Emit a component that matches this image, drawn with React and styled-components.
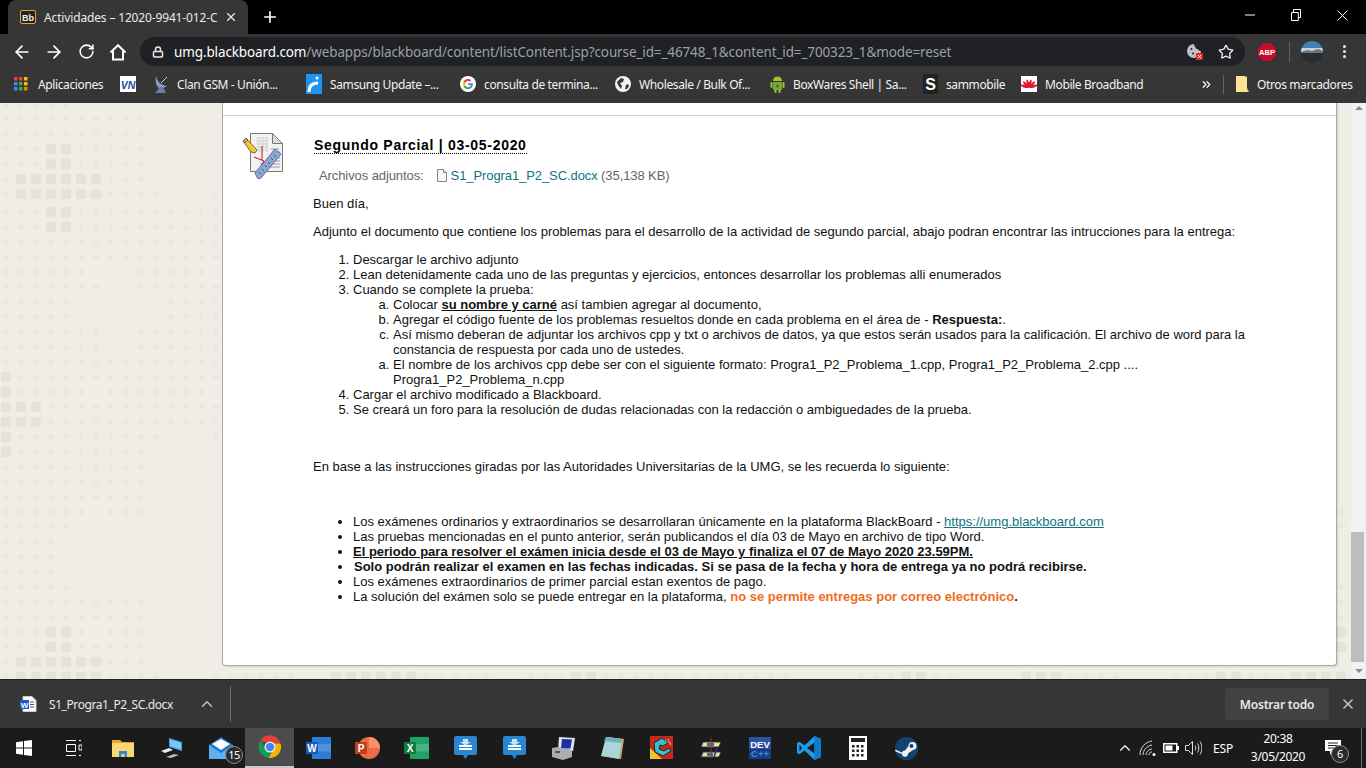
import React from 'react';
import styled, { createGlobalStyle } from 'styled-components';
import { ArrowLeft, ArrowRight, RotateCw, Lock, Star, X, Plus, ChevronUp, ChevronsRight } from 'lucide-react';

const GlobalStyle = createGlobalStyle`
  html, body { margin: 0; padding: 0; overflow: hidden; background: #000; }
  * { box-sizing: border-box; }
`;

const uiFont = `"Noto Sans", "Open Sans", sans-serif`;

const Screen = styled.div`
  width: 1366px;
  height: 768px;
  display: flex;
  flex-direction: column;
  overflow: hidden;
  font-family: ${uiFont};
`;

/* barra de pestañas */
const TabStrip = styled.div`
  height: 34px;
  background: #000;
  display: flex;
  align-items: flex-end;
  padding-left: 8px;
  color: #fff;
`;

const Tab = styled.div`
  width: 240px;
  height: 34px;
  background: #363636;
  border-radius: 8px 8px 0 0;
  display: flex;
  align-items: center;
  padding: 0 0 0 12px;
  gap: 8px;
  font-size: 12px;
  color: #e8eaed;
  white-space: nowrap;
`;

const TabTitle = styled.span`
  width: 172px;
  letter-spacing: -0.15px;
`;

const NewTab = styled.div`
  width: 44px;
  height: 34px;
  display: flex;
  align-items: center;
  justify-content: center;
`;

const WindowButtons = styled.div`
  margin-left: auto;
  height: 34px;
  display: flex;
  align-items: center;
`;

const WindowButton = styled.div`
  width: 46.5px;
  height: 30px;
  display: flex;
  align-items: center;
  justify-content: center;
  margin-bottom: 4px;
`;

/* barra de direcciones */
const Toolbar = styled.div`
  height: 36px;
  background: #363636;
  display: flex;
  align-items: flex-start;
  padding: 3px 0 0 6px;
  color: #fff;
`;

const NavButton = styled.div`
  width: 32px;
  height: 29px;
  display: flex;
  align-items: center;
  justify-content: center;
`;

const Omnibox = styled.div`
  margin-left: 6px;
  width: 1105px;
  height: 29px;
  border-radius: 15px;
  background: #202124;
  display: flex;
  align-items: center;
  padding: 0 11px 0 12px;
  font-size: 13.5px;
  color: #9aa0a6;
  white-space: nowrap;
`;

const Url = styled.span`
  margin-left: 10px;
  letter-spacing: -0.12px;
  b { font-weight: 400; color: #fff; }
`;

const OmniIcons = styled.div`
  margin-left: auto;
  display: flex;
  align-items: center;
  gap: 15px;
`;

const ToolIcons = styled.div`
  flex: 1;
  display: flex;
  align-items: center;
  height: 29px;
  padding-left: 13px;
  gap: 13px;
`;

const ToolDivider = styled.div`
  width: 1px;
  height: 20px;
  background: #5f6368;
  margin-right: -2px;
`;

const Dots = styled.div`
  margin-left: 7px;
  width: 4px;
  display: flex;
  flex-direction: column;
  gap: 2px;
  i { display: block; width: 3px; height: 3px; border-radius: 50%; background: #e8eaed; }
`;

/* marcadores */
const BookmarkBar = styled.div`
  height: 33px;
  background: #363636;
  display: flex;
  align-items: center;
  padding: 0 0 5px 14px;
  font-size: 12px;
  color: #f1f3f4;
  white-space: nowrap;
`;

const Bookmark = styled.div`
  width: ${(p) => p.$w}px;
  display: flex;
  align-items: center;
  gap: ${(p) => p.$gap ?? 8}px;
  flex: none;
  span { letter-spacing: -0.38px; }
`;

const BarDivider = styled.div`
  width: 1px;
  height: 19px;
  background: #5f6368;
  margin: 0 12px 0 10px;
`;

/* página */
const Page = styled.div`
  position: relative;
  height: 576px;
  background: #efede6;
  display: flex;
  overflow: hidden;
`;

const PatternLayer = styled.svg`
  position: absolute;
  left: 0;
  top: 0;
`;

const CardArea = styled.div`
  position: relative;
  flex: 1;
  padding: 0 14px 13px 222px;
`;

const Card = styled.div`
  height: 100%;
  background: #fff;
  border: 1px solid #a9a9a4;
  border-top: 0;
  border-radius: 0 0 4px 4px;
  box-shadow: 1px 1px 2px rgba(0, 0, 0, 0.12);
`;

const CardTop = styled.div`
  height: 13px;
  border-bottom: 1px solid #ccc;
`;

const ItemRow = styled.div`
  display: flex;
  padding: 17px 0 0 19px;
`;

const ItemIcon = styled.div`
  width: 71px;
  flex: none;
`;

const ItemBody = styled.div`
  width: 938px;
  font-family: "Liberation Sans", Arial, sans-serif;
  font-size: 13px;
  line-height: 15px;
  color: #111;
`;

const Title = styled.h3`
  display: inline-block;
  margin: 4px 0 0 1px;
  font-size: 14px;
  line-height: 16px;
  font-weight: 700;
  letter-spacing: 0.7px;
  color: #000;
  border-bottom: 1px dotted #000;
`;

const Attached = styled.div`
  display: flex;
  align-items: center;
  margin: 14px 0 0 6px;
  color: #666;
  letter-spacing: -0.09px;
`;

const AttachedFile = styled.div`
  display: flex;
  align-items: center;
  margin-left: 12px;
  gap: 3px;
`;

const FileLink = styled.a`
  color: #0f7382;
  text-decoration: none;
`;

const UrlLink = styled(FileLink)`
  text-decoration: underline;
`;

const Para = styled.p`
  margin: ${(p) => p.$top ?? 13}px 0 0;
`;

const Numbered = styled.ol`
  margin: ${(p) => p.$top ?? 0}px 0 0;
  padding-left: 40px;
`;

const Bullets = styled.ul`
  margin: 40px 0 0;
  padding-left: 40px;
`;

const Em = styled.strong`
  text-decoration: ${(p) => (p.$u ? 'underline' : 'none')};
  color: ${(p) => p.$c ?? 'inherit'};
  margin-left: ${(p) => p.$indent ?? 0}px;
`;

const Scrollbar = styled.div`
  position: relative;
  width: 15px;
  background: #f1f1f1;
  display: flex;
  flex-direction: column;
  align-items: center;
  justify-content: space-between;
  padding: 3px 0 6px;
`;

const ScrollThumb = styled.div`
  position: absolute;
  left: 0;
  top: 429px;
  width: 13px;
  height: 130px;
  background: #bdbdbd;
`;

const ScrollArrow = styled.div`
  width: 0;
  height: 0;
  border-left: 4px solid transparent;
  border-right: 4px solid transparent;
  ${(p) => (p.$up ? 'border-bottom: 4px solid #8a8a8a;' : 'border-top: 4px solid #8a8a8a;')}
`;

/* barra de descargas */
const DownloadBar = styled.div`
  height: 49px;
  background: #363636;
  border-top: 1px solid #222;
  display: flex;
  align-items: center;
  padding-left: 20px;
  font-size: 12px;
  color: #e8eaed;
`;

const DownloadName = styled.span`
  margin-left: 12px;
  width: 126px;
  letter-spacing: -0.42px;
  white-space: nowrap;
`;

const DownloadCaret = styled.div`
  width: 18px;
  margin-left: 23px;
  display: flex;
  color: #bdc1c6;
`;

const DownloadDivider = styled.div`
  width: 1px;
  height: 36px;
  background: #6b6b6b;
  margin-left: 14px;
`;

const ShowAll = styled.button`
  margin-left: auto;
  width: 104px;
  height: 32px;
  border: 0;
  border-radius: 4px;
  background: #424242;
  color: #e8eaed;
  font: 600 12px ${uiFont};
  letter-spacing: -0.2px;
`;

const CloseBar = styled.div`
  width: 37px;
  display: flex;
  justify-content: center;
  color: #c4c4c4;
`;

/* barra de tareas */
const Taskbar = styled.div`
  height: 40px;
  background: #1b1b1b;
  display: flex;
  align-items: stretch;
  color: #fff;
`;

const TaskButton = styled.div`
  position: relative;
  width: ${(p) => p.$w ?? 49}px;
  flex: none;
  display: flex;
  align-items: center;
  justify-content: center;
  background: ${(p) => (p.$active ? '#4c4c4c' : 'transparent')};
  border-bottom: ${(p) => (p.$active ? '2px solid #c9c9c9' : '0')};
`;

const Badge = styled.span`
  position: absolute;
  right: ${(p) => p.$r ?? 2}px;
  bottom: ${(p) => p.$b ?? 4}px;
  min-width: 18px;
  height: 18px;
  border-radius: 50%;
  background: #2a2a2a;
  border: 1px solid #8f8f8f;
  color: #fff;
  font-size: 11px;
  line-height: 16px;
  text-align: center;
  letter-spacing: -0.5px;
`;

const Tray = styled.div`
  margin-left: auto;
  display: flex;
  align-items: center;
  padding-right: 4px;
  font-size: 12px;
  color: #fff;
`;

const TrayIcon = styled.div`
  width: 23px;
  display: flex;
  justify-content: center;
`;

const Lang = styled.div`
  width: 36px;
  text-align: center;
  letter-spacing: -0.2px;
`;

const Clock = styled.div`
  width: 74px;
  text-align: center;
  line-height: 18px;
  letter-spacing: -0.3px;
`;

const Notice = styled.div`
  position: relative;
  width: 46px;
  height: 40px;
  display: flex;
  align-items: center;
  padding-left: 10px;
  margin-top: -1px;
`;

const ShowDesktop = styled.div`
  width: 1px;
  height: 40px;
  background: #6f6f6f;
`;

/* dibujos */
const Bb = () => (
  <svg width="16" height="14" viewBox="0 0 16 14">
    <rect x="0.5" y="0.5" width="15" height="13" rx="1.5" fill="#222" stroke="#e8a33b" />
    <text x="8" y="10.5" textAnchor="middle" fontSize="9" fontWeight="700" fill="#eee" fontFamily="Liberation Sans">Bb</text>
  </svg>
);

const HomeIcon = () => (
  <svg width="18" height="18" viewBox="0 0 18 18" fill="none" stroke="#fff" strokeWidth="2" strokeLinejoin="miter">
    <path d="M1.5 9.5 9 2.2l7.5 7.3M4 8v8.5h10V8" />
  </svg>
);

const Minimize = () => <svg width="10" height="10" viewBox="0 0 10 10"><path d="M0 5h10" stroke="#fff" /></svg>;
const Restore = () => (
  <svg width="10" height="12" viewBox="0 0 10 12" fill="none" stroke="#fff">
    <path d="M.5 3.5h6.8v8H.5zM2.5 3.5V.5h7v8H7.3" />
  </svg>
);
const Close = () => <svg width="11" height="11" viewBox="0 0 11 11"><path d="M.5.5l10 10M10.5.5l-10 10" stroke="#fff" /></svg>;

const CookieBlocked = () => (
  <svg width="16" height="17" viewBox="0 0 16 17">
    <path d="M7 1a7 7 0 1 0 7 7c-2 .3-3-1-3-2-1.500.200-3-.800-2.800-2.800C7.300 3 7 2 7 1z" fill="#bdc1c6" />
    <circle cx="4.500" cy="6" r="1" fill="#202124" /><circle cx="6" cy="10.500" r="1" fill="#202124" />
    <rect x="9" y="10" width="7" height="7" rx="1" fill="#d93025" />
    <path d="M11 12l3 3M14 12l-3 3" stroke="#fff" />
  </svg>
);

const Abp = () => (
  <svg width="18" height="18" viewBox="0 0 18 18">
    <path d="M5.500 0h7L18 5.500v7L12.500 18h-7L0 12.500v-7z" fill="#c70d2c" />
    <text x="9" y="12" textAnchor="middle" fontSize="7.500" fontWeight="700" fill="#fff" fontFamily="Liberation Sans">ABP</text>
  </svg>
);

const Avatar = () => (
  <svg width="22" height="22" viewBox="0 0 22 22">
    <defs><clipPath id="avatarClip"><circle cx="11" cy="11" r="11" /></clipPath></defs>
    <g clipPath="url(#avatarClip)">
      <rect width="22" height="8" fill="#3f7fb8" />
      <rect y="7" width="22" height="4" fill="#c6d4de" />
      <rect y="11" width="22" height="11" fill="#2b2c2e" />
      <path d="M0 11l6-2 5 1 6-2 5 2v2H0z" fill="#6d7378" />
    </g>
  </svg>
);

const Apps = () => {
  const colors = ['#ea4335', '#ea4335', '#fbbc04', '#4285f4', '#34a853', '#fbbc04', '#4285f4', '#34a853', '#ea8600'];
  return (
    <svg width="14" height="14" viewBox="0 0 14 14">
      {colors.map((c, i) => (
        <rect key={i} x={(i % 3) * 5} y={Math.floor(i / 3) * 5} width="3.500" height="3.500" fill={c} />
      ))}
    </svg>
  );
};

const Vn = () => (
  <svg width="16" height="16" viewBox="0 0 16 16">
    <rect width="16" height="16" fill="#fff" />
    <text x="8" y="12.500" textAnchor="middle" fontSize="10.500" fontWeight="700" fontStyle="italic" fill="#1d4e9e" fontFamily="Liberation Sans">VN</text>
  </svg>
);

const Dish = () => (
  <svg width="16" height="18" viewBox="0 0 16 18">
    <path d="M3 1c1 5 4 9 11 10-3 2-6 3-8 2C3 11 2 6 3 1z" fill="#8c9bc4" />
    <path d="M7 12 2 18h11l-3-6z" fill="#6d7ba5" />
    <path d="M8 8l6-6" stroke="#c8cfe4" />
  </svg>
);

const SamsungUpdate = () => (
  <svg width="16" height="20" viewBox="0 0 16 20">
    <rect width="16" height="20" fill="#1e96f0" />
    <circle cx="11" cy="4" r="1.500" fill="#fff" />
    <path d="M3 18c0-6 3-9 9-9" fill="none" stroke="#fff" strokeWidth="3" />
  </svg>
);

const GoogleG = () => (
  <svg width="16" height="16" viewBox="0 0 16 16">
    <circle cx="8" cy="8" r="8" fill="#fff" />
    <path d="M12.800 8.200c0-.400 0-.700-.1-1H8v1.900h2.700c-.100.700-.500 1.200-1 1.600l1.600 1.200c1-.900 1.500-2.200 1.500-3.700z" fill="#4285f4" />
    <path d="M8 13c1.300 0 2.400-.400 3.300-1.100l-1.600-1.200c-.400.300-1 .500-1.700.500-1.300 0-2.400-.900-2.800-2L3.500 10.400C4.300 12 6 13 8 13z" fill="#34a853" />
    <path d="M5.200 9.200a3 3 0 0 1 0-2L3.500 5.600a5 5 0 0 0 0 4.800z" fill="#fbbc04" />
    <path d="M8 5c.700 0 1.400.300 1.900.700l1.400-1.400A5 5 0 0 0 3.500 5.600l1.700 1.600C5.600 5.900 6.700 5 8 5z" fill="#ea4335" />
  </svg>
);

const Globe = () => (
  <svg width="16" height="16" viewBox="0 0 16 16">
    <circle cx="8" cy="8" r="8" fill="#f1f3f4" />
    <path d="M6 2 9 3 8 6 5 7 7 10l-1 3-3-4-1-3zM11 9l2-1 1 2-2 3-2 0z" fill="#363636" />
  </svg>
);

const Android = () => (
  <svg width="15" height="18" viewBox="0 0 15 18">
    <path d="M3 6a4.500 4.500 0 0 1 9 0z" fill="#9fc43a" />
    <rect x="3" y="7" width="9" height="8" rx="1" fill="#7fa62b" />
    <rect x="0.500" y="7" width="2" height="6" rx="1" fill="#9fc43a" />
    <rect x="12.500" y="7" width="2" height="6" rx="1" fill="#9fc43a" />
    <rect x="4.500" y="14" width="2" height="4" rx="1" fill="#9fc43a" />
    <rect x="8.500" y="14" width="2" height="4" rx="1" fill="#9fc43a" />
    <path d="M6 11l1.500-2L9 11l-1.500 2z" fill="#2c5fa0" />
  </svg>
);

const SamMobile = () => (
  <svg width="15" height="20" viewBox="0 0 15 20">
    <rect width="15" height="20" rx="1" fill="#222" />
    <text x="7.500" y="16" textAnchor="middle" fontSize="16" fontWeight="700" fill="#fff" fontFamily="Liberation Sans">S</text>
  </svg>
);

const Huawei = () => (
  <svg width="16" height="16" viewBox="0 0 16 16">
    <rect width="16" height="16" fill="#fff" />
    <g fill="#e1132a">
      {[-70, -42, -14, 14, 42, 70].map((a) => (
        <path key={a} d="M8 12C6.500 9 6.500 5.500 7.500 3.500h1C9.500 5.500 9.500 9 8 12z" transform={`rotate(${a} 8 12)`} />
      ))}
    </g>
  </svg>
);

const Folder = () => (
  <svg width="13" height="18" viewBox="0 0 13 18">
    <path d="M0 1h8l3 1v15H0z" fill="#fde293" />
    <path d="M11 13v4h2z" fill="#f9cb4f" />
  </svg>
);

const AssignmentIcon = () => (
  <svg width="42" height="46" viewBox="0 0 42 46">
    <path d="M8.500.500h22l10 10v28h-32z" fill="#f2f2f2" stroke="#777" />
    <path d="M30.500.500v10h10z" fill="#ddd" stroke="#777" />
    <g stroke="#cfcfcf">
      <path d="M14 5h12M14 8h12M14 11h12M14 14h12M14 17h12M17 5v14M21 5v14M25 5v14" />
    </g>
    <g stroke="#999">
      <path d="M29 16h8M30 19h8M32 22h6M33 25h5M32 28h6M28 31h10M24 34h14" />
    </g>
    <path d="M13 40 33 16l6 5-20 24-3 1z" fill="#8ea7d2" stroke="#5a6f99" />
    <path d="M17 39l2 2M20 36l2 2M23 32l2 2M26 29l2 2M29 25l2 2M32 22l2 2" stroke="#3f5680" />
    <path d="M1 8 4 5l11 12-2 3-4-1z" fill="#f3c640" stroke="#7c6a2a" />
    <path d="M1 8l3-3 2 2-3 3z" fill="#e58a7a" stroke="#7c6a2a" />
    <path d="M20 13v14M12 24l10 4-3 4" fill="none" stroke="#c4121f" />
  </svg>
);

const FileIcon = () => (
  <svg width="12" height="13" viewBox="0 0 12 13">
    <path d="M1.500.500h6l3 3v9h-9z" fill="#f8f8f8" stroke="#7d8794" />
    <path d="M7.500.500v3h3" fill="#dfe3e8" stroke="#7d8794" />
  </svg>
);

const WordFile = () => (
  <svg width="17" height="16" viewBox="0 0 17 16">
    <path d="M3 .500h9l4 4V15.500H3z" fill="#fff" stroke="#ccc" />
    <path d="M10 6h4M10 8.500h4M10 11h4" stroke="#2b579a" />
    <rect y="4" width="9" height="9" fill="#1d5bbd" />
    <text x="4.500" y="11.500" textAnchor="middle" fontSize="8" fontWeight="700" fill="#fff" fontFamily="Liberation Sans">W</text>
  </svg>
);

const Windows = () => (
  <svg width="16" height="16" viewBox="0 0 16 16" fill="#fff">
    <path d="M0 2.300 7 1.300V7.500H0zM8 1.100 16 0V7.500H8zM0 8.500h7v6.200L0 13.700zM8 8.500h8V16L8 14.900z" />
  </svg>
);

const TaskView = () => (
  <svg width="17" height="16" viewBox="0 0 17 16" fill="none" stroke="#fff">
    <path d="M1 .500h10M1 15.500h10M1.500 4.500h9v7h-9z" />
    <path d="M14 .500h2M14 15.500h2M14 5h3v5h-3z" />
  </svg>
);

const Explorer = () => (
  <svg width="22" height="18" viewBox="0 0 22 18">
    <path d="M0 1h8l2 2h12v15H0z" fill="#e4a52f" />
    <rect y="4" width="22" height="14" fill="#fbd774" />
    <path d="M7 18v-6h8v6h-2.500v-3h-3v3z" fill="#2f87d6" />
  </svg>
);

const Laptop = () => (
  <svg width="24" height="22" viewBox="0 0 24 22">
    <path d="M9 1l13 4v9L9 10z" fill="#3ba0e8" />
    <path d="M10 2.500l11 3.400v6.500L10 9z" fill="#7cc6f4" />
    <path d="M1 14l8-3 4 2-8 3z" fill="#e8e8e8" />
    <path d="M6 20l8-3 5 1-8 3z" fill="#b9b9b9" />
  </svg>
);

const Mail = () => (
  <svg width="24" height="22" viewBox="0 0 24 22">
    <path d="M0 8 12 0l12 8v14H0z" fill="#1a78d0" />
    <path d="M0 8l12 8 12-8v14H0z" fill="#5db2ef" />
    <path d="M3 7l9-5 9 5-9 6z" fill="#fff" />
  </svg>
);

const Chrome = () => (
  <svg width="24" height="24" viewBox="0 0 24 24">
    <path d="M2.300 6A11 11 0 0 1 22.500 8.500H12z" fill="#db4437" />
    <path d="M2.300 6A11 11 0 0 0 10.500 22.900L14 14 8 13z" fill="#0f9d58" />
    <path d="M22.500 8.500A11 11 0 0 1 10.500 22.900L16 13 12 8.500z" fill="#f4b400" />
    <circle cx="12" cy="12" r="5.500" fill="#f1f1f1" />
    <circle cx="12" cy="12" r="4.200" fill="#4285f4" />
  </svg>
);

const Office = ({ back, front, letter, round }) => (
  <svg width="25" height="22" viewBox="0 0 25 22">
    {round ? <circle cx="14" cy="11" r="11" fill={back} /> : <rect x="6" width="19" height="22" rx="1" fill={back} />}
    {round ? <path d="M14 0a11 11 0 0 1 11 11H14z" fill="#ff8f6b" /> : <rect x="6" y="7" width="19" height="7.500" fill="rgba(255,255,255,.18)" />}
    <rect y="5" width="12" height="12" rx="1" fill={front} />
    <text x="6" y="14.500" textAnchor="middle" fontSize="10" fontWeight="700" fill="#fff" fontFamily="Liberation Sans">{letter}</text>
  </svg>
);

const Dropper = () => (
  <svg width="23" height="24" viewBox="0 0 23 24">
    <path d="M2 0h19a2 2 0 0 1 2 2v15a2 2 0 0 1-2 2h-7l-2.500 4L9 19H2a2 2 0 0 1-2-2V2a2 2 0 0 1 2-2z" fill="#2a86d0" />
    <path d="M5 10h13M5 13h13" stroke="#fff" strokeWidth="2" />
    <path d="M9 3h5v3h3l-5.500 3.500L6 6h3z" fill="#bfe7f7" />
  </svg>
);

const Scanner = () => (
  <svg width="24" height="24" viewBox="0 0 24 24">
    <path d="M7 1l16 1-2 13H6z" fill="#dfe3ea" />
    <path d="M10 3l10 .500-1.500 9H9z" fill="#1c2fa8" />
    <path d="M0 12l6-1 14 3v7l-9 3-11-3z" fill="#a9adb4" />
    <path d="M3 15h5v2H3z" fill="#555" />
  </svg>
);

const Notepad = () => (
  <svg width="23" height="23" viewBox="0 0 23 23">
    <path d="M6 0l17 2-3 20-19-3z" fill="#c9a56a" />
    <path d="M5 0l16 2-3 20L0 19z" fill="#a7d7da" />
    <path d="M5 0l16 2-1 4L3 4z" fill="#6fb0b8" />
  </svg>
);

const CodeBlocks = () => (
  <svg width="24" height="24" viewBox="0 0 24 24">
    <rect width="23" height="23" fill="#c7281a" />
    <path d="M0 12l12 11H0z" fill="#f0c52e" />
    <path d="M4 7l8-5 6 5-5 3-3-1-1 4 5 2 5-3 2 3-8 5-8-4z" fill="#2fc3cf" stroke="#222" />
    <path d="M15 4l6 4M18 3l3 6" stroke="#eee" strokeDasharray="1 1" />
  </svg>
);

const Dev = () => (
  <svg width="22" height="22" viewBox="0 0 22 22">
    <rect width="22" height="22" fill="#2c4f9e" />
    <rect y="12" width="22" height="10" fill="#1a3b86" />
    <text x="11" y="10.500" textAnchor="middle" fontSize="9.500" fontWeight="700" fill="#fff" fontFamily="Liberation Sans">DEV</text>
    <text x="11" y="20" textAnchor="middle" fontSize="9.500" fontWeight="700" fill="#3e8de0" fontFamily="Liberation Sans">C++</text>
  </svg>
);

const Tools = () => (
  <svg width="22" height="20" viewBox="0 0 22 20">
    <path d="M3 4h18l-2 5H1z" fill="#dfe59a" stroke="#333" />
    <path d="M3 14h18l-2 5H1z" fill="#dfe59a" stroke="#333" />
    <path d="M11 0v20" stroke="#a3261f" />
    <path d="M7 5h7v3H7zM7 15h6v3H7z" fill="#5b5f86" />
    <path d="M17 10l-3 9" stroke="#1730c4" strokeWidth="1.500" />
  </svg>
);

const VsCode = () => (
  <svg width="24" height="24" viewBox="0 0 24 24">
    <path d="M17.500 0 24 3v18l-6.500 3-10-9.500-5 3.800L0 17V7l2.500-1.300 5 3.800z" fill="#1f9cf0" />
    <path d="M17.500 6.500 10 12l7.500 5.500z" fill="#1b1b1b" />
    <path d="M2.500 8.500 5 12l-2.500 3.500z" fill="#1b1b1b" />
    <path d="M17.500 0 24 3v18l-6.500 3z" fill="#0e7cc9" />
  </svg>
);

const Calc = () => (
  <svg width="18" height="24" viewBox="0 0 18 24">
    <rect width="18" height="24" fill="#fff" />
    <rect x="2" y="2" width="14" height="4" fill="#222" />
    {[0, 1, 2].map((r) => [0, 1, 2].map((c) => (
      <rect key={`${r}${c}`} x={3 + c * 4.500} y={9 + r * 4.500} width="2.500" height="2.500" fill="#222" />
    )))}
  </svg>
);

const Steam = () => (
  <svg width="23" height="23" viewBox="0 0 23 23">
    <circle cx="11.500" cy="11.500" r="11.500" fill="#12436f" />
    <path d="M0 12.500 7 15.500A3 3 0 0 1 10 13.500l3.500-4.500A4 4 0 1 1 18 13l-5 3.500A3 3 0 0 1 7 17L.6 14.500z" fill="#f1f1f1" />
    <circle cx="16.500" cy="9" r="2" fill="#12436f" />
  </svg>
);

const Wifi = () => (
  <svg width="18" height="16" viewBox="0 0 18 16" fill="none" stroke="#ddd">
    <path d="M1 15C1 8 6 2 13 1M4 15c0-5 4-9 9-10M7 15c0-3 3-6 6-6M10 15c0-2 1-3 3-3" />
    <circle cx="15" cy="14.500" r="1.500" fill="#fff" stroke="none" />
  </svg>
);

const Battery = () => (
  <svg width="16" height="10" viewBox="0 0 16 10">
    <rect x=".75" y=".75" width="13" height="8.500" fill="none" stroke="#fff" strokeWidth="1.500" />
    <rect x="2.500" y="2.500" width="7" height="5" fill="#fff" />
    <rect x="14" y="3" width="2" height="4" fill="#fff" />
  </svg>
);

const Speaker = () => (
  <svg width="17" height="14" viewBox="0 0 17 14" fill="none" stroke="#ddd">
    <path d="M.5 4.500h3l4-4v13l-4-4h-3z" />
    <path d="M10 4.500c1 1.500 1 3.500 0 5M12.500 2.500c1.800 2.500 1.800 6.500 0 9M15 .5c2.500 3.500 2.500 9.500 0 13" />
  </svg>
);

const NoticeIcon = () => (
  <svg width="16" height="15" viewBox="0 0 16 15">
    <path d="M0 0h16v11H8l-3 4v-4H0z" fill="#fff" />
    <path d="M3 3h10M3 5.500h10M3 8h10" stroke="#222" />
  </svg>
);

/* trama de fondo: fila y, cruces pequeñas, cruces grandes */
const parseCols = (s) =>
  (s || '').split(',').filter(Boolean).flatMap((part) => {
    const [a, b] = part.split('-').map(Number);
    const out = [];
    for (let i = a; i <= (b ?? a); i++) out.push(i);
    return out;
  });

const patternRows = [
  [105, '0-4', ''], [119, '0-9', ''], [134, '0-9', ''], [149, '0-2,5-9', '3-4'], [164, '0-2,5-9', '3-4'],
  [179, '0,7-9', '1-6'], [194, '0,7-10,14', '1-6'], [212, '0-2,5-14', '3-4'], [227, '0-2,5-14', '3-4'],
  [242, '0-14', ''], [257, '0-14', ''], [272, '0-6,9-14', ''], [287, '0-6,9-14', ''], [302, '0-4,11-14', ''],
  [317, '0-4,11-14', ''], [332, '0-6,9-14', ''], [347, '0-6,9-14', ''], [362, '0-14', ''], [377, '1-14', '0'],
  [392, '1-14', '0'], [407, '3-14', '0-2'], [422, '3-14', '0-2'], [437, '1-10,14', '0'], [452, '1-9', '0'],
  [467, '0-9', ''], [482, '0-9', ''], [497, '0-9', ''], [512, '0-9,89', ''], [527, '0-4,89', ''], [542, '0-3', ''],
  [557, '0-3', ''], [572, '0-3', ''], [587, '0-4,89', ''], [602, '0-9,89', ''], [617, '0-9,89', ''],
  [632, '0-2,5-9', '3-4,89'], [647, '0-2,5-9', '3-4,89'], [662, '0,7-9', '1-6'],
  [677, '0,7-10,14-19,28-32,35-37,40-52,57-59,62-63,71-74,78-80,83-85', '1-6,22-27,38-39,60-61,68-70,81-82,86-89'],
];

const Pattern = () => (
  <PatternLayer width="1366" height="576" viewBox="0 103 1366 576" aria-hidden="true">
    {patternRows.map(([y, small, big]) => (
      <g key={y}>
        {parseCols(small).map((c) => (
          <path key={c} d={`M${6 + c * 15 - 1} ${y - 3.500}h2v2.500h2.500v2h-2.500v2.500h-2v-2.500h-2.500v-2h2.500z`} fill="#e8e6df" />
        ))}
        {parseCols(big).map((c) => (
          <g key={c} fill="#e4e2da" transform={`translate(${6 + c * 15} ${y})`}>
            <circle cx="-2.500" cy="-2.500" r="2.700" /><circle cx="2.500" cy="-2.500" r="2.700" />
            <circle cx="-2.500" cy="2.500" r="2.700" /><circle cx="2.500" cy="2.500" r="2.700" />
            <path d="M-1.500-5h3v10h-3zM-5-1.500h10v3h-10z" />
          </g>
        ))}
      </g>
    ))}
  </PatternLayer>
);

const bookmarks = [
  { w: 106, gap: 10, icon: <Apps />, text: 'Aplicaciones' },
  { w: 33, icon: <Vn /> },
  { w: 153, icon: <Dish />, text: 'Clan GSM - Unión...' },
  { w: 154, icon: <SamsungUpdate />, text: 'Samsung Update –...' },
  { w: 155, icon: <GoogleG />, text: 'consulta de termina...' },
  { w: 155, icon: <Globe />, text: 'Wholesale / Bulk Of...' },
  { w: 153, icon: <Android />, text: 'BoxWares Shell | Sa...' },
  { w: 98, icon: <SamMobile />, text: 'sammobile' },
  { w: 179, icon: <Huawei />, text: 'Mobile Broadband' },
];

const taskApps = [
  { icon: <Explorer /> },
  { icon: <Laptop /> },
  { icon: <Mail />, badge: '15' },
  { icon: <Chrome />, active: true },
  { icon: <Office back="#2b7cd3" front="#185abd" letter="W" /> },
  { icon: <Office back="#ed6c47" front="#c43e1c" letter="P" round /> },
  { icon: <Office back="#21a366" front="#107c41" letter="X" /> },
  { icon: <Dropper /> },
  { icon: <Dropper /> },
  { icon: <Scanner /> },
  { icon: <Notepad /> },
  { icon: <CodeBlocks /> },
  { icon: <Tools /> },
  { icon: <Dev /> },
  { icon: <VsCode /> },
  { icon: <Calc /> },
  { icon: <Steam /> },
];

const App = () => (
  <Screen>
    <GlobalStyle />
    <TabStrip>
      <Tab>
        <Bb />
        <TabTitle>Actividades – 12020-9941-012-C</TabTitle>
        <X size={14} color="#e8eaed" strokeWidth={2} />
      </Tab>
      <NewTab><Plus size={18} strokeWidth={2.2} /></NewTab>
      <WindowButtons>
        <WindowButton><Minimize /></WindowButton>
        <WindowButton><Restore /></WindowButton>
        <WindowButton><Close /></WindowButton>
      </WindowButtons>
    </TabStrip>

    <Toolbar>
      <NavButton><ArrowLeft size={20} strokeWidth={2} /></NavButton>
      <NavButton><ArrowRight size={20} strokeWidth={2} /></NavButton>
      <NavButton><RotateCw size={17} strokeWidth={2.2} /></NavButton>
      <NavButton><HomeIcon /></NavButton>
      <Omnibox>
        <Lock size={12} strokeWidth={3} color="#e8eaed" />
        <Url><b>umg.blackboard.com</b>/webapps/blackboard/content/listContent.jsp?course_id=_46748_1&amp;content_id=_700323_1&amp;mode=reset</Url>
        <OmniIcons>
          <CookieBlocked />
          <Star size={16} color="#e8eaed" strokeWidth={2} />
        </OmniIcons>
      </Omnibox>
      <ToolIcons>
        <Abp />
        <ToolDivider />
        <Avatar />
        <Dots><i /><i /><i /></Dots>
      </ToolIcons>
    </Toolbar>

    <BookmarkBar>
      {bookmarks.map((b, i) => (
        <Bookmark key={i} $w={b.w} $gap={b.gap}>
          {b.icon}
          {b.text && <span>{b.text}</span>}
        </Bookmark>
      ))}
      <ChevronsRight size={13} strokeWidth={2.5} />
      <BarDivider />
      <Bookmark $w={120}>
        <Folder />
        <span>Otros marcadores</span>
      </Bookmark>
    </BookmarkBar>

    <Page>
      <Pattern />
      <CardArea>
        <Card>
          <CardTop />
          <ItemRow>
            <ItemIcon><AssignmentIcon /></ItemIcon>
            <ItemBody>
              <Title>Segundo Parcial | 03-05-2020</Title>
              <Attached>
                Archivos adjuntos:
                <AttachedFile>
                  <FileIcon />
                  <span><FileLink href="#">S1_Progra1_P2_SC.docx</FileLink> (35,138 KB)</span>
                </AttachedFile>
              </Attached>
              <Para>Buen día,</Para>
              <Para>Adjunto el documento que contiene los problemas para el desarrollo de la actividad de segundo parcial, abajo podran encontrar las intrucciones para la entrega:</Para>
              <Numbered $top={13}>
                <li>Descargar le archivo adjunto</li>
                <li>Lean detenidamente cada uno de las preguntas y ejercicios, entonces desarrollar los problemas alli enumerados</li>
                <li>Cuando se complete la prueba:
                  <Numbered type="a">
                    <li>Colocar <Em $u>su nombre y carné</Em> así tambien agregar al documento,</li>
                    <li>Agregar el código fuente de los problemas resueltos donde en cada problema en el área de - <Em>Respuesta:</Em>.</li>
                    <li>Así mismo deberan de adjuntar los archivos cpp y txt o archivos de datos, ya que estos serán usados para la calificación. El archivo de word para la constancia de respuesta por cada uno de ustedes.</li>
                  </Numbered>
                  <Numbered type="a">
                    <li>El nombre de los archivos cpp debe ser con el siguiente formato: Progra1_P2_Problema_1.cpp, Progra1_P2_Problema_2.cpp .... Progra1_P2_Problema_n.cpp</li>
                  </Numbered>
                </li>
                <li>Cargar el archivo modificado a Blackboard.</li>
                <li>Se creará un foro para la resolución de dudas relacionadas con la redacción o ambiguedades de la prueba.</li>
              </Numbered>
              <Para $top={42}>En base a las instrucciones giradas por las Autoridades Universitarias de la UMG, se les recuerda lo siguiente:</Para>
              <Bullets>
                <li>Los exámenes ordinarios y extraordinarios se desarrollaran únicamente en la plataforma BlackBoard - <UrlLink href="#">https://umg.blackboard.com</UrlLink></li>
                <li>Las pruebas mencionadas en el punto anterior, serán publicandos el día 03 de Mayo en archivo de tipo Word.</li>
                <li><Em $u>El periodo para resolver el exámen inicia desde el 03 de Mayo y finaliza el 07 de Mayo 2020 23.59PM.</Em></li>
                <li><Em $indent={1}>Solo podrán realizar el examen en las fechas indicadas. Si se pasa de la fecha y hora de entrega ya no podrá recibirse.</Em></li>
                <li>Los exámenes extraordinarios de primer parcial estan exentos de pago.</li>
                <li>La solución del exámen solo se puede entregar en la plataforma, <Em $c="#f26a21">no se permite entregas por correo electrónico</Em><Em>.</Em></li>
              </Bullets>
            </ItemBody>
          </ItemRow>
        </Card>
      </CardArea>
      <Scrollbar>
        <ScrollArrow $up />
        <ScrollThumb />
        <ScrollArrow />
      </Scrollbar>
    </Page>

    <DownloadBar>
      <WordFile />
      <DownloadName>S1_Progra1_P2_SC.docx</DownloadName>
      <DownloadCaret><ChevronUp size={18} strokeWidth={2} /></DownloadCaret>
      <DownloadDivider />
      <ShowAll>Mostrar todo</ShowAll>
      <CloseBar><X size={16} strokeWidth={2.4} /></CloseBar>
    </DownloadBar>

    <Taskbar>
      <TaskButton $w={48}><Windows /></TaskButton>
      <TaskButton $w={50}><TaskView /></TaskButton>
      {taskApps.map((a, i) => (
        <TaskButton key={i} $active={a.active}>
          {a.icon}
          {a.badge && <Badge>{a.badge}</Badge>}
        </TaskButton>
      ))}
      <Tray>
        <TrayIcon><ChevronUp size={18} strokeWidth={1.5} /></TrayIcon>
        <TrayIcon><Wifi /></TrayIcon>
        <TrayIcon><Battery /></TrayIcon>
        <TrayIcon><Speaker /></TrayIcon>
        <Lang>ESP</Lang>
        <Clock>20:38<br />3/05/2020</Clock>
        <Notice>
          <NoticeIcon />
          <Badge $r={12} $b={5}>6</Badge>
        </Notice>
        <ShowDesktop />
      </Tray>
    </Taskbar>
  </Screen>
);

export default App;
